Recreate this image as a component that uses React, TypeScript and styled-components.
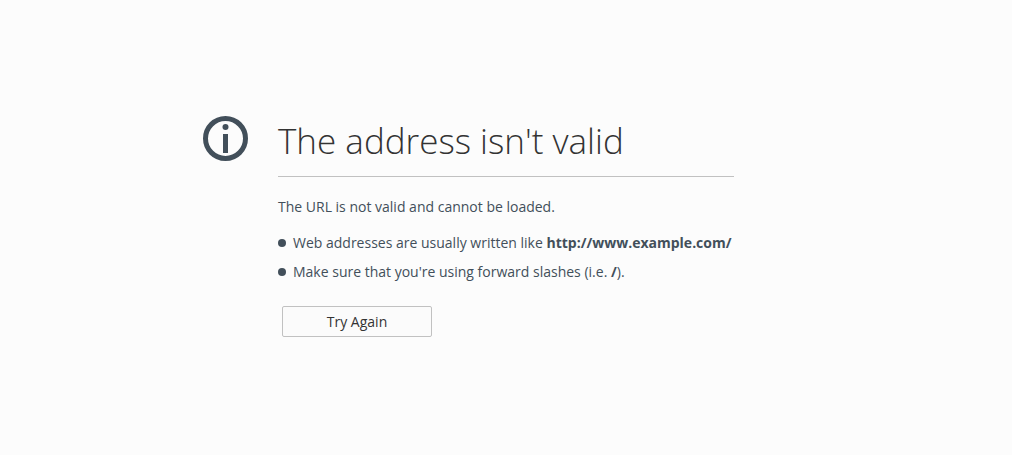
import React from "react";
import styled, { createGlobalStyle } from "styled-components";

const GlobalStyle = createGlobalStyle`
  * { box-sizing: border-box; }
  body {
    margin: 0;
    background: #fcfcfc;
    color: #424f5a;
    font-family: "Open Sans", "Noto Sans", sans-serif;
    font-size: 14px;
    line-height: 20px;
  }
`;

const Page = styled.div`
  min-height: 100vh;
  padding-bottom: 2px;
  display: flex;
  align-items: center;
  justify-content: center;
`;

const Content = styled.main`
  display: flex;
  gap: 30px;
  padding-right: 75px;
`;

const Message = styled.div`
  min-width: 456px;
`;

const InfoIcon = styled.svg`
  width: 45px;
  height: 45px;
  flex: none;
`;

const Title = styled.h1`
  margin: 0 0 20px;
  padding-bottom: 10px;
  border-bottom: 1px solid #c1c1c1;
  color: #333;
  font-size: 35px;
  font-weight: 300;
  line-height: 50px;
`;

const Description = styled.p`
  margin: 0 0 16px;
`;

const HintList = styled.ul`
  margin: 0 0 24px;
  padding: 0;
  list-style: none;
  display: grid;
  gap: 9px;
`;

const Hint = styled.li`
  display: flex;
  align-items: center;
  gap: 7px;

  &::before {
    content: "";
    width: 8px;
    height: 8px;
    border-radius: 50%;
    background: #424f5a;
  }
`;

const Button = styled.button`
  width: 150px;
  height: 31px;
  margin-left: 4px;
  border: 1px solid #c1c1c1;
  border-radius: 2px;
  background: #fbfbfb;
  color: #333;
  font: inherit;
`;

export default function App() {
  return (
    <Page>
      <GlobalStyle />
      <Content>
        <InfoIcon viewBox="0 0 45 45" aria-hidden="true">
          <circle cx="22.5" cy="22.5" r="20" fill="none" stroke="#424f5a" strokeWidth="5" />
          <circle cx="22.5" cy="11" r="3" fill="#424f5a" />
          <path d="M20 18h5v19h-5z" fill="#424f5a" />
        </InfoIcon>
        <Message>
          <Title>The address isn't valid</Title>
          <Description>The URL is not valid and cannot be loaded.</Description>
          <HintList>
            <Hint><span>Web addresses are usually written like <strong>http://www.example.com/</strong></span></Hint>
            <Hint><span>Make sure that you're using forward slashes (i.e. <strong>/</strong>).</span></Hint>
          </HintList>
          <Button type="button">Try Again</Button>
        </Message>
      </Content>
    </Page>
  );
}
